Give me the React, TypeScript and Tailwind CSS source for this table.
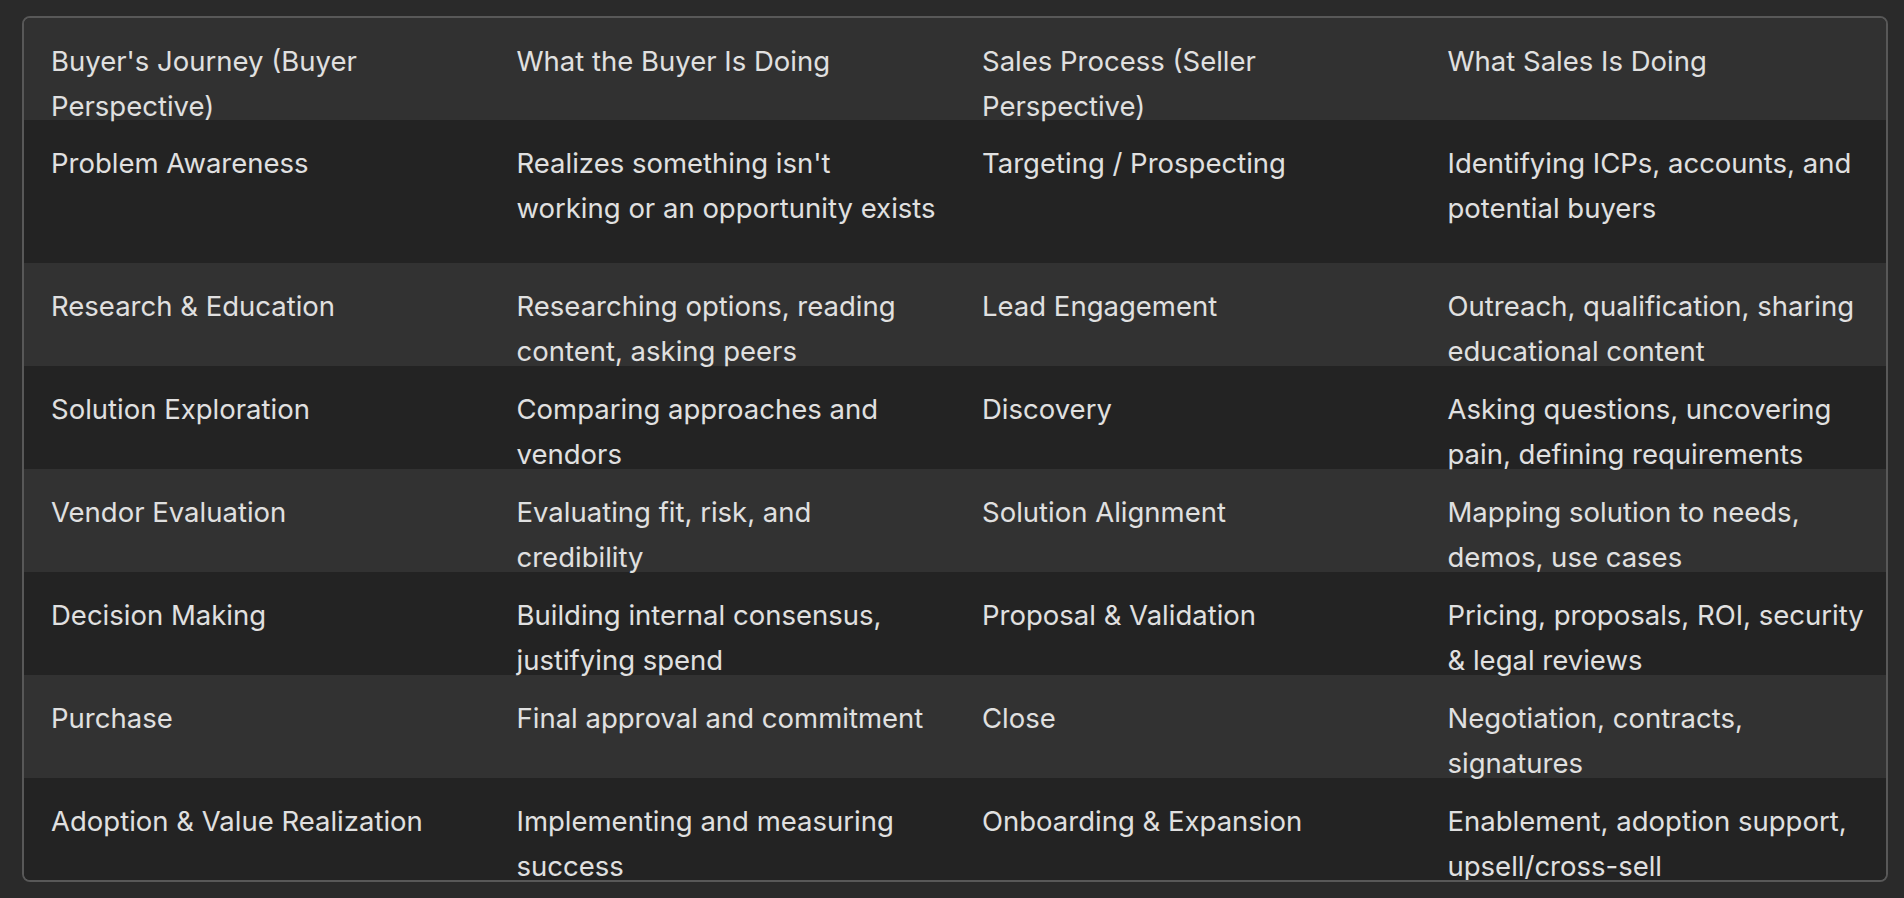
// each cell is split into the lines as they wrap in the reference
const rows = [
  {
    cells: [
      ['Problem Awareness'],
      ["Realizes something isn't", 'working or an opportunity exists'],
      ['Targeting / Prospecting'],
      ['Identifying ICPs, accounts, and', 'potential buyers'],
    ],
    tall: true,
  },
  {
    cells: [
      ['Research & Education'],
      ['Researching options, reading', 'content, asking peers'],
      ['Lead Engagement'],
      ['Outreach, qualification, sharing', 'educational content'],
    ],
  },
  {
    cells: [
      ['Solution Exploration'],
      ['Comparing approaches and', 'vendors'],
      ['Discovery'],
      ['Asking questions, uncovering', 'pain, defining requirements'],
    ],
  },
  {
    cells: [
      ['Vendor Evaluation'],
      ['Evaluating fit, risk, and', 'credibility'],
      ['Solution Alignment'],
      ['Mapping solution to needs,', 'demos, use cases'],
    ],
  },
  {
    cells: [
      ['Decision Making'],
      ['Building internal consensus,', 'justifying spend'],
      ['Proposal & Validation'],
      ['Pricing, proposals, ROI, security', '& legal reviews'],
    ],
  },
  {
    cells: [
      ['Purchase'],
      ['Final approval and commitment'],
      ['Close'],
      ['Negotiation, contracts,', 'signatures'],
    ],
  },
  {
    cells: [
      ['Adoption & Value Realization'],
      ['Implementing and measuring', 'success'],
      ['Onboarding & Expansion'],
      ['Enablement, adoption support,', 'upsell/cross-sell'],
    ],
  },
];

const headers = [
  ["Buyer's Journey (Buyer", 'Perspective)'],
  ['What the Buyer Is Doing'],
  ['Sales Process (Seller', 'Perspective)'],
  ['What Sales Is Doing'],
];

function Cell({ lines }: { lines: string[] }) {
  return (
    <div className="pl-[27px] pt-[21px] whitespace-nowrap">
      {lines.map((l) => (
        <div key={l}>{l}</div>
      ))}
    </div>
  );
}

export default function App() {
  return (
    <div
      className="min-h-screen w-full bg-[#2a2a2a] pt-[16px] pl-[22px] pb-[16px] text-[27.5px] leading-[45px] text-[#e0e0e0]"
      style={{ fontFamily: 'Inter, "Noto Sans", "Liberation Sans", sans-serif' }}
    >
      <div className="w-[1866px] h-[866px] overflow-hidden rounded-[8px] border-2 border-[#585858] bg-[#262626]">
        {/* header */}
        <div className="grid grid-cols-4 h-[102px] bg-[#313131]">
          {headers.map((h) => (
            <Cell key={h[0]} lines={h} />
          ))}
        </div>

        {rows.map((r, i) => (
          <div
            key={r.cells[0][0]}
            className={
              'grid grid-cols-4 ' +
              (r.tall ? 'h-[143px] ' : 'h-[103px] ') +
              (i % 2 === 0 ? 'bg-[#232323]' : 'bg-[#323232]')
            }
          >
            {r.cells.map((c) => (
              <Cell key={c[0]} lines={c} />
            ))}
          </div>
        ))}
      </div>
    </div>
  );
}
